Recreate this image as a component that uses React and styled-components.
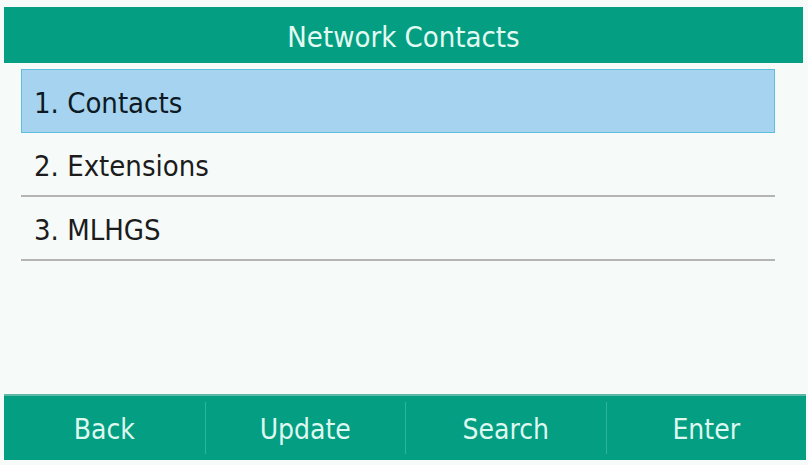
import React from 'react';
import styled, { createGlobalStyle } from 'styled-components';

const GlobalStyle = createGlobalStyle`
  html, body {
    margin: 0;
    padding: 0;
    background: #f6faf8;
  }
  * {
    box-sizing: border-box;
  }
`;

const Screen = styled.div`
  width: 808px;
  height: 465px;
  display: flex;
  flex-direction: column;
  background: #f6faf8;
  font-family: "DejaVu Sans Condensed", "DejaVu Sans", sans-serif;
  overflow: hidden;
`;

const TitleBar = styled.header`
  margin: 7px 5px 0 4px;
  height: 56px;
  background: #049e82;
  color: #e2fbf2;
  display: flex;
  align-items: center;
  justify-content: center;
  font-size: 29px;
  padding-top: 3px;
`;

const List = styled.ul`
  list-style: none;
  margin: 6px 0 0 0;
  padding: 0 33px 0 21px;
  flex: 1;
`;

const Row = styled.li`
  height: 64px;
  display: flex;
  align-items: center;
  padding-left: ${p => (p.$selected ? '12px' : '13px')};
  padding-top: 3px;
  font-size: 29px;
  color: ${p => (p.$selected ? '#0d1a24' : '#1c1c1c')};
  background: ${p => (p.$selected ? '#a6d3ef' : 'transparent')};
  border: ${p => (p.$selected ? '1px solid #5dbfdd' : 'none')};
  border-bottom: ${p => (p.$selected ? '1px solid #5dbfdd' : '2px solid #b4b4b4')};
`;

const SoftKeys = styled.footer`
  margin: 0 2px 5px 4px;
  height: 66px;
  background: #049e82;
  border-top: 2px solid #5fb8a6;
  display: grid;
  grid-template-columns: repeat(4, 1fr);
  align-items: center;
`;

const SoftKey = styled.div`
  height: 52px;
  display: flex;
  align-items: center;
  justify-content: center;
  padding-top: 3px;
  font-size: 28px;
  color: #def8f0;
  border-left: ${p => (p.$first ? 'none' : '1px solid #2cb598')};
`;

const items = ['1. Contacts', '2. Extensions', '3. MLHGS'];
const keys = ['Back', 'Update', 'Search', 'Enter'];

const App = () => (
  <>
    <GlobalStyle />
    <Screen>
      <TitleBar>Network Contacts</TitleBar>
      <List>
        {items.map((label, i) => (
          <Row key={label} $selected={i === 0}>
            {label}
          </Row>
        ))}
      </List>
      <SoftKeys>
        {keys.map((k, i) => (
          <SoftKey key={k} $first={i === 0}>
            {k}
          </SoftKey>
        ))}
      </SoftKeys>
    </Screen>
  </>
);

export default App;
